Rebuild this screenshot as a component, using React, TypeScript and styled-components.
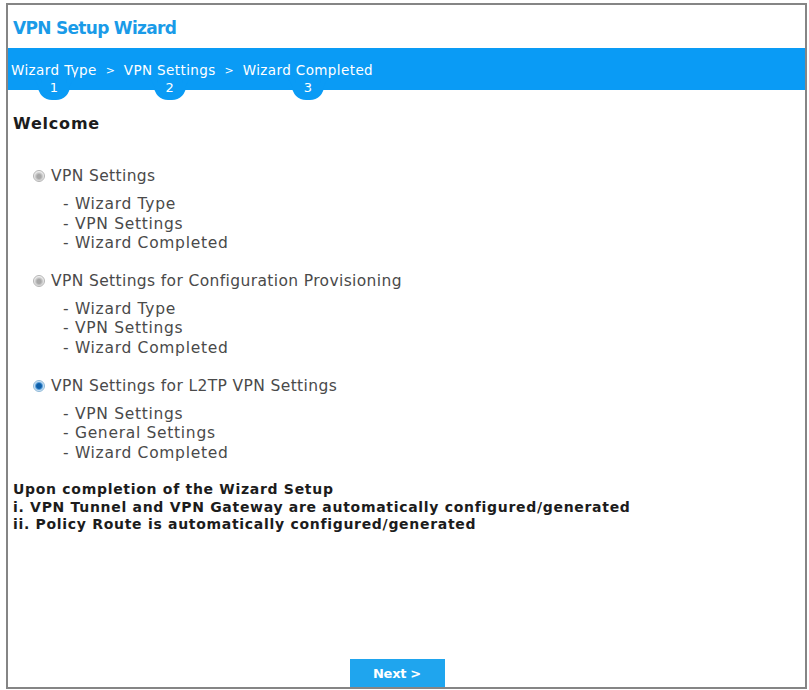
import React, { useState } from "react";
import styled, { createGlobalStyle } from "styled-components";

const GlobalStyle = createGlobalStyle`
  html, body {
    margin: 0;
    padding: 0;
    background: #ffffff;
  }
  body {
    padding: 3px 0 0 6px;
    font-family: "DejaVu Sans", "Liberation Sans", sans-serif;
  }
`;

const BLUE = "#0a9bf5";

const Frame = styled.div`
  box-sizing: border-box;
  width: 801px;
  height: 686px;
  border: 2px solid #858585;
  display: flex;
  flex-direction: column;
  background: #fff;
`;

const Title = styled.h1`
  margin: 0;
  height: 43px;
  padding: 13px 0 0 5px;
  box-sizing: border-box;
  font-size: 17px;
  line-height: 20px;
  font-weight: bold;
  color: #1a9be8;
  letter-spacing: -0.7px;
`;

const StepBar = styled.div`
  height: 42px;
  background: ${BLUE};
  display: flex;
  align-items: flex-start;
  padding-left: 3px;
`;

const Step = styled.div`
  display: flex;
  flex-direction: column;
  align-items: center;
  padding-top: 15px;
`;

const StepLabel = styled.span`
  font-size: 13.5px;
  line-height: 15px;
  color: #fff;
  letter-spacing: 0.4px;
  white-space: nowrap;
`;

// number tab hanging under each step label
const StepTab = styled.span`
  position: relative;
  margin-top: 1px;
  width: 32px;
  height: 21px;
  background: ${BLUE};
  border-radius: 0 0 14px 14px;
  color: #fff;
  font-size: 13px;
  line-height: 17px;
  text-align: center;

  &::before,
  &::after {
    content: "";
    position: absolute;
    top: 0;
    width: 8px;
    height: 11px;
    background: transparent;
  }
  &::before {
    left: -8px;
    border-top-right-radius: 8px;
    box-shadow: 4px -4px 0 0 ${BLUE};
  }
  &::after {
    right: -8px;
    border-top-left-radius: 8px;
    box-shadow: -4px -4px 0 0 ${BLUE};
  }
`;

const Chevron = styled.span`
  width: 27px;
  padding-top: 15px;
  text-align: center;
  font-size: 11px;
  line-height: 15px;
  color: #fff;
`;

const Body = styled.div`
  flex: 1;
  padding: 24px 0 0 5px;
  display: flex;
  flex-direction: column;
`;

const Heading = styled.h2`
  margin: 0 0 31px;
  font-size: 16px;
  line-height: 20px;
  font-weight: bold;
  color: #1c1c1c;
  letter-spacing: 0.8px;
`;

const Option = styled.div`
  padding-left: 20px;
  margin-bottom: 16px;
`;

const OptionRow = styled.label`
  display: flex;
  align-items: center;
  gap: 6px;
  height: 22px;
  font-size: 15.5px;
  color: #4a4a4a;
  letter-spacing: 0.37px;
  cursor: pointer;
`;

const Radio = styled.span<{ $on: boolean }>`
  box-sizing: border-box;
  width: 12px;
  height: 12px;
  border-radius: 50%;
  border: 1px solid ${(p) => (p.$on ? "#8fb9d8" : "#b5b5b5")};
  background: ${(p) =>
    p.$on
      ? `radial-gradient(circle, #0f5fa8 0 2.4px, #3f8fd4 3.2px, #cfe4f5 4.6px)`
      : `radial-gradient(circle at 50% 55%, #a8a8a8 0 2px, #cacaca 3.5px, #f0f0f0 5px)`};
`;

const SubList = styled.ul`
  list-style: none;
  margin: 8px 0 0;
  padding-left: 30px;
`;

const SubItem = styled.li`
  font-size: 15.5px;
  line-height: 19.6px;
  color: #4a4a4a;
  letter-spacing: 0.7px;
`;

const Notes = styled.div`
  margin-top: 2px;
  font-size: 14px;
  line-height: 17.5px;
  font-weight: bold;
  color: #1c1c1c;
  letter-spacing: 0.7px;
`;

const Footer = styled.div`
  margin-top: auto;
  display: flex;
  justify-content: center;
  padding-right: 24px;
`;

const NextButton = styled.button`
  width: 95px;
  height: 28px;
  border: none;
  background: #1fa5ee;
  color: #fff;
  font-family: inherit;
  font-size: 13px;
  font-weight: bold;
  letter-spacing: -0.3px;
  cursor: pointer;
`;

const steps = ["Wizard Type", "VPN Settings", "Wizard Completed"];

const options = [
  {
    label: "VPN Settings",
    items: ["Wizard Type", "VPN Settings", "Wizard Completed"],
  },
  {
    label: "VPN Settings for Configuration Provisioning",
    items: ["Wizard Type", "VPN Settings", "Wizard Completed"],
  },
  {
    label: "VPN Settings for L2TP VPN Settings",
    items: ["VPN Settings", "General Settings", "Wizard Completed"],
  },
];

const App: React.FC = () => {
  const [selected, setSelected] = useState(2);

  return (
    <>
      <GlobalStyle />
      <Frame>
        <Title>VPN Setup Wizard</Title>
        <StepBar>
          {steps.map((s, i) => (
            <React.Fragment key={s}>
              {i > 0 && <Chevron>&gt;</Chevron>}
              <Step>
                <StepLabel>{s}</StepLabel>
                <StepTab>{i + 1}</StepTab>
              </Step>
            </React.Fragment>
          ))}
        </StepBar>
        <Body>
          <Heading>Welcome</Heading>
          {options.map((o, i) => (
            <Option key={o.label}>
              <OptionRow onClick={() => setSelected(i)}>
                <Radio $on={selected === i} />
                {o.label}
              </OptionRow>
              <SubList>
                {o.items.map((it) => (
                  <SubItem key={it}>- {it}</SubItem>
                ))}
              </SubList>
            </Option>
          ))}
          <Notes>
            Upon completion of the Wizard Setup
            <br />
            i. VPN Tunnel and VPN Gateway are automatically configured/generated
            <br />
            ii. Policy Route is automatically configured/generated
          </Notes>
          <Footer>
            <NextButton>Next &gt;</NextButton>
          </Footer>
        </Body>
      </Frame>
    </>
  );
};

export default App;
